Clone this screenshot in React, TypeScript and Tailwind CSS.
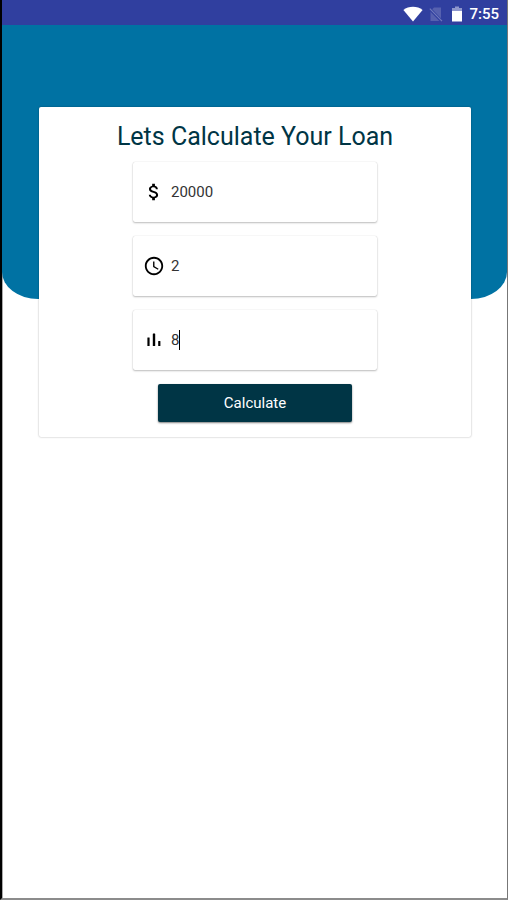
import { useState } from "react";
import { MdAccessTime } from "react-icons/md";

const DollarIcon = () => (
    <svg viewBox="0 0 24 24" className="size-[22px]" fill="currentColor" aria-hidden="true">
        <path d="M11.8 10.9c-2.27-.59-3-1.2-3-2.15 0-1.09 1.01-1.85 2.7-1.85 1.78 0 2.44.85 2.5 2.1h2.21c-.07-1.72-1.12-3.3-3.21-3.81V3h-3v2.16c-1.94.42-3.5 1.68-3.5 3.61 0 2.31 1.91 3.46 4.7 4.13 2.5.6 3 1.48 3 2.41 0 .69-.49 1.79-2.7 1.79-2.06 0-2.87-.92-2.98-2.1h-2.2c.12 2.19 1.76 3.42 3.68 3.83V21h3v-2.15c1.95-.37 3.5-1.5 3.5-3.55 0-2.84-2.43-3.81-4.7-4.4z" />
    </svg>
);

const BarsIcon = () => (
    <svg viewBox="0 0 22 22" className="size-[22px]" fill="currentColor" aria-hidden="true">
        <rect x="4.4" y="8.4" width="2.2" height="8.6" rx="0.3" />
        <rect x="9.8" y="4.6" width="2.4" height="12.4" rx="0.3" />
        <rect x="15.2" y="12" width="2.2" height="5" rx="0.3" />
    </svg>
);

const StatusBar = () => (
    <header className="flex h-[25px] items-center justify-end bg-[#303f9f] pr-2 pt-0.5 text-white">
        <svg viewBox="0 0 20 16" className="h-4 w-5" fill="currentColor" aria-hidden="true">
            <path d="M10 15.5 0.4 4C3 1.9 6.4 0.8 10 0.8s7 1.1 9.6 3.2z" />
        </svg>
        <svg viewBox="0 0 14 16" className="ml-1.5 h-4 w-3.5" aria-hidden="true">
            <path d="M5 1.5h7V15H1.5V5z" fill="#5661af" />
            <path d="M0.5 2.5 13 15.5" stroke="#303f9f" strokeWidth="3" />
            <path d="M0.8 2.6 13 15.2" stroke="#6f79bc" strokeWidth="1.2" />
        </svg>
        <svg viewBox="0 0 12 16" className="ml-2 h-4 w-3" aria-hidden="true">
            <path d="M4 0.5h4v1.5h3V5H1V2h3z" fill="#8f97cc" />
            <path d="M1 5h10v10.5H1z" fill="currentColor" />
        </svg>
        <span className="ml-1.5 text-[15px] font-medium leading-6">7:55</span>
    </header>
);

const fields = [
    { name: "amount", label: "Loan amount", icon: <DollarIcon /> },
    { name: "years", label: "Loan term", icon: <MdAccessTime className="size-[22px]" /> },
    { name: "rate", label: "Interest rate", icon: <BarsIcon /> }
];

const App = () => {
    const [values, setValues] = useState<Record<string, string>>({ amount: "20000", years: "2", rate: "8" });

    return (
        <div className="flex min-h-screen flex-col border-b-2 border-l-2 border-r border-b-[#8c8c8c] border-l-black border-r-[#777] bg-white font-['Roboto',sans-serif] shadow-[inset_1px_0_#aaa]">
            <StatusBar />
            <div className="h-[274px] rounded-b-[36px_27px] bg-[#0072a3]" />
            <main className="-mt-48 pl-[37px] pr-9">
                <form
                    className="flex flex-col items-center rounded-xs bg-white px-4 pb-[15px] pt-[13px] shadow-[0_0_2px_rgba(0,0,0,0.35)]"
                    onSubmit={(e) => e.preventDefault()}
                >
                    <h1 className="text-[25px] leading-[34px] text-[#003545]">Lets Calculate Your Loan</h1>
                    <div className="mt-2 flex w-full max-w-[244px] flex-col gap-3.5">
                        {fields.map(({ name, label, icon }) => (
                            <div
                                key={name}
                                className="relative flex h-[60px] items-center rounded-xs bg-white pl-2.5 pr-3 text-black shadow-[0_1px_2px_rgba(0,0,0,0.25),0_0_1px_rgba(0,0,0,0.2)]"
                            >
                                <span className="shrink-0">{icon}</span>
                                <input
                                    aria-label={label}
                                    name={name}
                                    inputMode="numeric"
                                    value={values[name]}
                                    onChange={(e) => setValues({ ...values, [name]: e.target.value })}
                                    className="ml-1.5 w-full min-w-0 bg-transparent text-[15px] leading-5 text-[#333] outline-none"
                                />
                                {name === "rate" && <span className="absolute left-[46px] h-5 w-px bg-black" />}
                            </div>
                        ))}
                    </div>
                    <button
                        type="submit"
                        className="mt-3.5 h-[38px] w-full max-w-[194px] rounded-xs bg-[#003545] text-[15px] text-white shadow-[0_1px_2px_rgba(0,0,0,0.5)]"
                    >
                        Calculate
                    </button>
                </form>
            </main>
        </div>
    );
};

export default App;
